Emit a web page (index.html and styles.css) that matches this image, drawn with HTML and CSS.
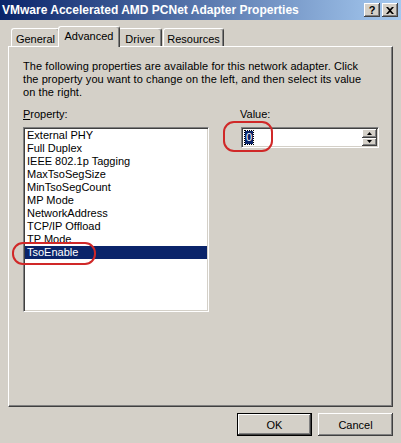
FILE: index.html
```html
<!DOCTYPE html>
<html>
<head>
<meta charset="utf-8">
<link rel="stylesheet" href="styles.css">
</head>
<body>
<div class="window">
  <div class="titlebar">
    <span class="title">VMware Accelerated AMD PCNet Adapter Properties</span>
    <div class="caption-btns">
      <span class="cbtn help">?</span>
      <span class="cbtn close"><svg width="8" height="7" viewBox="0 0 8 7"><path d="M0 0 L2 0 L4 2 L6 0 L8 0 L5 3.5 L8 7 L6 7 L4 5 L2 7 L0 7 L3 3.5 Z" fill="#000"/></svg></span>
    </div>
  </div>
  <div class="tabs">
    <div class="tab tab-general">General</div>
    <div class="tab tab-advanced active">Advanced</div>
    <div class="tab tab-driver">Driver</div>
    <div class="tab tab-resources">Resources</div>
  </div>
  <div class="panel">
    <p class="desc">The following properties are available for this network adapter. Click<br>the property you want to change on the left, and then select its value<br>on the right.</p>
    <div class="fields">
      <div class="col-left">
        <div class="label"><u>P</u>roperty:</div>
        <div class="listbox">
          <div class="item">External PHY</div>
          <div class="item">Full Duplex</div>
          <div class="item">IEEE 802.1p Tagging</div>
          <div class="item">MaxTsoSegSize</div>
          <div class="item">MinTsoSegCount</div>
          <div class="item">MP Mode</div>
          <div class="item">NetworkAddress</div>
          <div class="item">TCP/IP Offload</div>
          <div class="item">TP Mode</div>
          <div class="item selected">TsoEnable</div>
        </div>
      </div>
      <div class="col-right">
        <div class="label">Value:</div>
        <div class="spin">
          <span class="spin-value">0</span>
          <div class="spin-btns">
            <span class="sbtn"><svg width="5" height="3" viewBox="0 0 5 3"><path d="M2.5 0 L5 3 L0 3 Z" fill="#000"/></svg></span>
            <span class="sbtn"><svg width="5" height="3" viewBox="0 0 5 3"><path d="M0 0 L5 0 L2.5 3 Z" fill="#000"/></svg></span>
          </div>
        </div>
      </div>
    </div>
  </div>
  <div class="buttons">
    <button class="btn default">OK</button>
    <button class="btn">Cancel</button>
  </div>
  <div class="mark mark-value"></div>
  <div class="mark mark-list"></div>
</div>
</body>
</html>
```

FILE: styles.css
```css
* { box-sizing: border-box; }
html, body { margin: 0; padding: 0; }
body {
  width: 401px;
  height: 443px;
  background: #d4d0c8;
  font-family: "Liberation Sans", Arial, sans-serif;
  font-size: 11px;
  color: #000;
  overflow: hidden;
}
.window {
  position: relative;
  width: 401px;
  height: 443px;
  display: flex;
  flex-direction: column;
}
.titlebar {
  height: 20px;
  background: linear-gradient(to right, #0a246a, #a6caf0);
  display: flex;
  align-items: center;
  justify-content: space-between;
  padding: 0 3px 0 2px;
}
.title {
  color: #fff;
  font-weight: bold;
  font-size: 12px;
  white-space: nowrap;
}
.caption-btns { display: flex; gap: 2px; }
.cbtn {
  width: 16px;
  height: 14px;
  background: #d4d0c8;
  box-shadow: inset -1px -1px #404040, inset 1px 1px #fff, inset -2px -2px #808080;
  display: flex;
  align-items: center;
  justify-content: center;
  font-weight: bold;
  font-size: 11px;
  line-height: 14px;
}
.tabs {
  margin-top: 6px;
  height: 20px;
  display: flex;
  align-items: flex-end;
  padding-left: 11px;
}
.tab {
  height: 18px;
  border-top: 1px solid #fff;
  border-left: 1px solid #fff;
  border-right: 1px solid #404040;
  border-radius: 3px 3px 0 0;
  box-shadow: inset -1px 0 #808080;
  display: flex;
  align-items: center;
  justify-content: center;
  padding-top: 2px;
  white-space: nowrap;
  background: #d4d0c8;
}
.tab-general { width: 49px; }
.tab-advanced { width: 62px; }
.tab-driver { width: 44px; }
.tab-resources { width: 61px; margin-left: 1px; }
.tab.active {
  height: 21px;
  margin: 0 -2px -1px;
  padding-top: 0;
  padding-bottom: 2px;
  position: relative;
  z-index: 1;
}
.panel {
  margin-left: 8px;
  width: 385px;
  height: 361px;
  border-top: 1px solid #fff;
  border-left: 1px solid #fff;
  border-right: 1px solid #404040;
  border-bottom: 1px solid #404040;
  box-shadow: inset -1px -1px #808080;
  padding: 13px 14px 0 14px;
}
.desc {
  margin: 0;
  line-height: 13px;
  white-space: nowrap;
  letter-spacing: 0.08px;
}
.fields {
  display: flex;
  margin-top: 9px;
}
.label {
  line-height: 13px;
  height: 13px;
  margin-bottom: 6px;
}
.col-left { width: 186px; }
.col-right { margin-left: 31px; }
.listbox {
  width: 186px;
  height: 185px;
  background: #fff;
  border-top: 1px solid #808080;
  border-left: 1px solid #808080;
  border-bottom: 1px solid #fff;
  border-right: 1px solid #fff;
  box-shadow: inset 1px 1px #404040, inset -1px -1px #d4d0c8;
  padding: 1px;
}
.item {
  height: 13px;
  line-height: 13px;
  padding-left: 2px;
  white-space: nowrap;
}
.item.selected {
  background: #0a246a;
  color: #fff;
}
.spin {
  margin-left: 1px;
  width: 138px;
  height: 21px;
  background: #fff;
  border-top: 1px solid #808080;
  border-left: 1px solid #808080;
  border-bottom: 1px solid #fff;
  border-right: 1px solid #fff;
  box-shadow: inset 1px 1px #404040, inset -1px -1px #d4d0c8;
  display: flex;
  align-items: center;
  justify-content: space-between;
  padding: 1px 1px 1px 3px;
}
.spin-value {
  background: #0a246a;
  color: #fff;
  line-height: 13px;
  padding: 0 1px;
  outline: 1px dotted #000;
}
.spin-btns {
  display: flex;
  flex-direction: column;
  width: 15px;
  height: 17px;
}
.sbtn {
  flex: 1;
  background: #d4d0c8;
  box-shadow: inset -1px -1px #404040, inset 1px 1px #fff, inset -2px -2px #808080;
  display: flex;
  align-items: center;
  justify-content: center;
}
.buttons {
  margin-top: 6px;
  display: flex;
  justify-content: flex-end;
  gap: 6px;
  padding-right: 8px;
}
.btn {
  width: 75px;
  height: 23px;
  background: #d4d0c8;
  font-family: inherit;
  font-size: 11px;
  color: #000;
  border: none;
  padding: 0;
  box-shadow: inset -1px -1px #404040, inset 1px 1px #fff, inset -2px -2px #808080;
}
.btn.default {
  border: 1px solid #000;
}
.mark {
  position: absolute;
  border: 2px solid #d02828;
  border-radius: 11px;
}
.mark-value { left: 223px; top: 121px; width: 50px; height: 31px; }
.mark-list { left: 12px; top: 242px; width: 84px; height: 23px; }
```
